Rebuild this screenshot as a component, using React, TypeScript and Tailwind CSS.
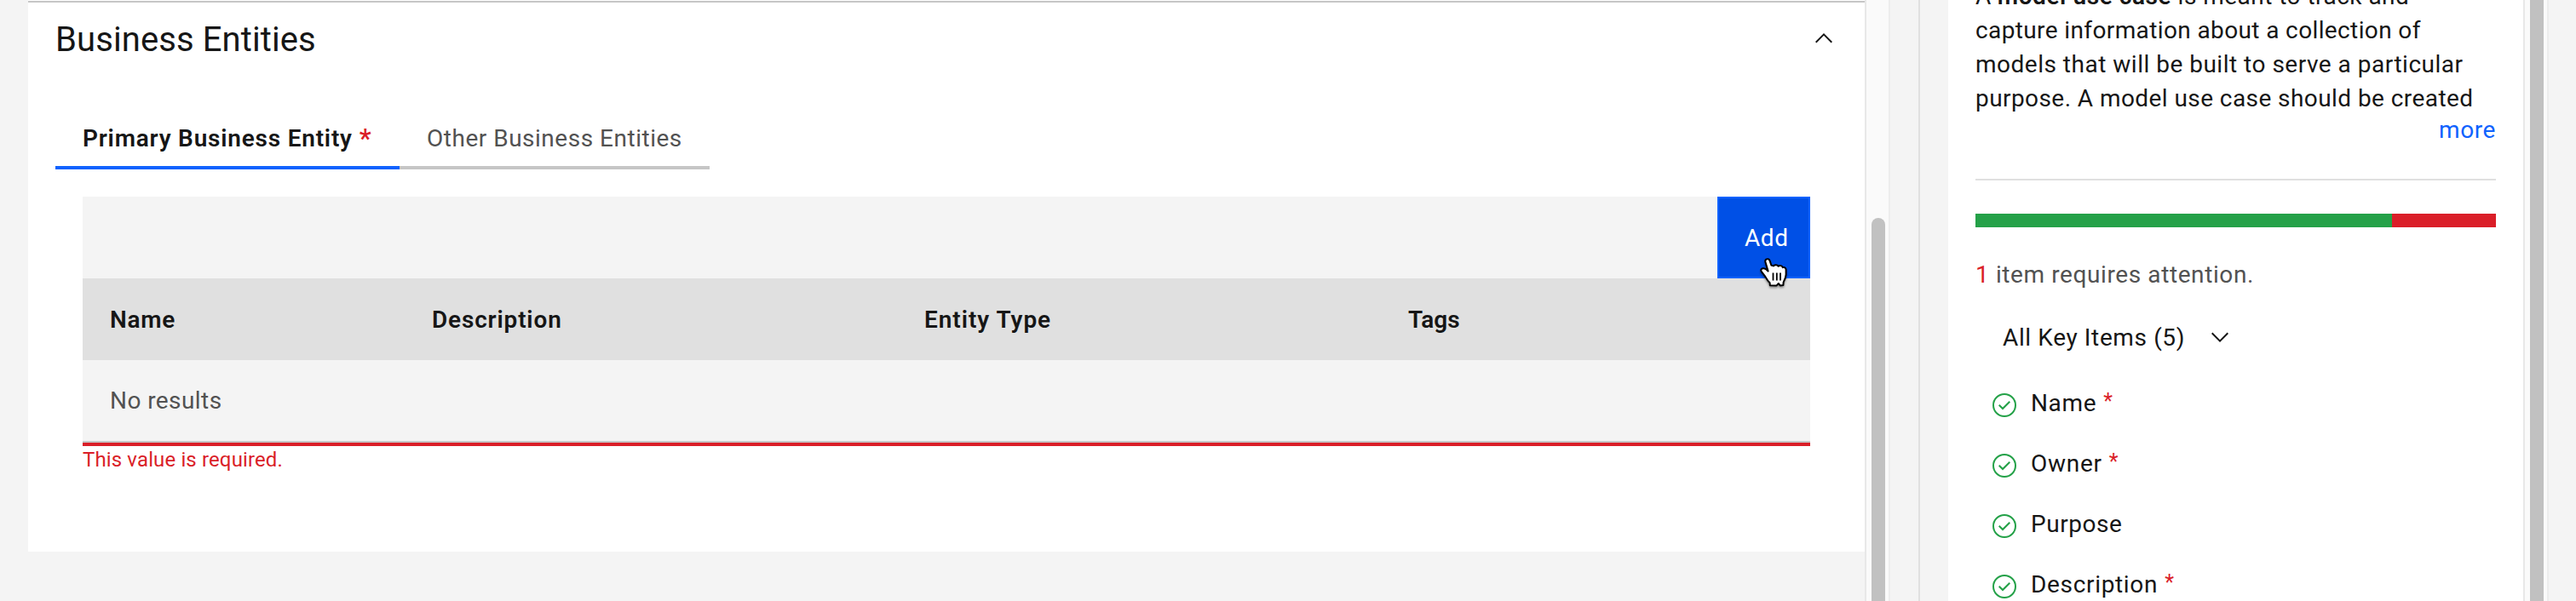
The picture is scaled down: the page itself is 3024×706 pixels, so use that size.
import type { ReactNode } from "react";

function ChevronUp() {
  return (
    <svg viewBox="0 0 32 32" className="size-8 fill-[#161616]">
      <path d="M16 10 26 20 24.6 21.4 16 12.8 7.4 21.4 6 20z" />
    </svg>
  );
}

function ChevronDown() {
  return (
    <svg viewBox="0 0 32 32" className="size-8 fill-[#161616]">
      <path d="M16 22 6 12 7.4 10.6 16 19.2 24.6 10.6 26 12z" />
    </svg>
  );
}

function CheckOutline() {
  return (
    <svg viewBox="0 0 32 32" className="size-8 shrink-0 fill-[#24a148]">
      <path d="M14 21.414l-5-5.001L10.413 15 14 18.586 21.585 11 23 12.415z" />
      <path d="M16 2a14 14 0 1 0 14 14A14 14 0 0 0 16 2Zm0 26a12 12 0 1 1 12-12 12 12 0 0 1-12 12Z" />
    </svg>
  );
}

function HandPointer() {
  return (
    <svg
      viewBox="0 0 34 38"
      className="absolute left-[47px] top-[69px] h-[38px] w-[34px] drop-shadow-[0_2px_1px_rgba(0,0,0,0.35)]"
    >
      <path
        d="M9.6 2.2C7.6 2.4 6.9 4.2 7.5 6L10.6 16.6C9.4 15.2 7.4 13.4 5.4 13.2 3 13 1.6 14.8 2.6 16.6 4.4 19.4 6.4 21.2 8.2 24.4 9.4 27 11 28.6 12.6 30.2L12.8 33.2 20.6 33.4 22.8 31 24.8 33.4 28.4 33 28.6 29.6C30 27 31.4 24 31.6 20.6L31.6 14.6C31.4 12.4 29.4 11.4 27.8 12.2 27.2 10 24.4 9.4 22.6 10.8 21.4 8.8 18.4 8.8 17 10.4 16.4 10 15.2 9.6 14.4 9.8L12.6 4.4C12.2 2.8 11 2 9.6 2.2Z"
        className="fill-white stroke-black stroke-2"
        strokeLinejoin="round"
      />
      <path d="M16.5 18.5v9M20.8 18.5v9M25 18.5v9" className="fill-none stroke-black stroke-[1.8]" />
    </svg>
  );
}

function KeyItem({ children, required }: { children: ReactNode; required?: boolean }) {
  return (
    <li className="flex h-[71px] items-start">
      <CheckOutline />
      <span className="-mt-[6px] ml-[15px] leading-[40px]">{children}</span>
      {required && (
        <span className="-mt-[8px] ml-[8px] text-[25px] leading-[40px] tracking-normal text-[#da1e28]">*</span>
      )}
    </li>
  );
}

function Scrollbar({ thumb }: { thumb: ReactNode }) {
  return (
    <div className="flex w-[30px] shrink-0 flex-col border-l-2 border-r-2 border-l-[#e8e8e8] border-r-[#ededed] bg-[#fafafa] pl-[6px] pr-[4px]">
      {thumb}
    </div>
  );
}

export default function App() {
  return (
    <div className="flex h-[706px] w-[3024px] overflow-hidden bg-[#f4f4f4] font-['Roboto',sans-serif] text-[28px] text-[#161616]">
      <main className="flex w-[2189px] shrink-0 pl-[33px]">
        <section className="h-[648px] w-full bg-white pt-px">
          <div className="border-t-2 border-[#c6c6c6]">
            <header className="flex h-[132px] items-start justify-between pl-8 pr-8 pt-[20px]">
              <h2 className="text-[40px] leading-[48px] tracking-[0.1px]">Business Entities</h2>
              <span className="mt-[6px]">
                <ChevronUp />
              </span>
            </header>

            <div className="ml-8 flex h-[64px]">
              <div className="flex w-[404px] border-b-4 border-[#0f62fe] pl-8 pt-[10px] font-semibold leading-[36px] tracking-[0.78px]">
                Primary Business Entity
                <span className="ml-[8px] text-[31px] text-[#da1e28]">*</span>
              </div>
              <div className="w-[364px] border-b-4 border-[#c6c6c6] pl-8 pt-[10px] leading-[36px] tracking-[0.51px] text-[#525252]">
                Other Business Entities
              </div>
            </div>

            <div className="ml-16 mt-8 w-[2028px]">
              <div className="flex h-24 justify-end bg-[#f4f4f4]">
                <button className="relative w-[109px] border-2 border-[#0f62fe] bg-[#0050e6] pl-[30px] pt-[2px] text-left tracking-[0.55px] text-white">
                  Add
                  <HandPointer />
                </button>
              </div>
              <div className="flex h-24 items-center bg-[#e0e0e0] pt-[2px] pl-8 font-semibold">
                <span className="w-[378px] tracking-[0.7px]">Name</span>
                <span className="w-[578px] tracking-[0.82px]">Description</span>
                <span className="w-[568px] tracking-[0.96px]">Entity Type</span>
                <span>Tags</span>
              </div>
              <div className="flex h-[97px] items-center border-b-2 border-[#c6c6c6] bg-[#f4f4f4] pl-8 pt-px tracking-[0.43px] text-[#525252]">
                No results
              </div>
              <div className="h-1 bg-[#da1e28]" />
              <p className="text-[24px] leading-[32px] tracking-[0.13px] text-[#da1e28]">
                This value is required.
              </p>
            </div>
          </div>
        </section>
      </main>

      <Scrollbar thumb={<div className="mt-64 h-[500px] rounded-t-full bg-[#c1c1c1]" />} />

      <aside className="flex w-[805px] shrink-0">
        <div className="ml-[33px] w-[35px] shrink-0 border-l-2 border-[#e0e0e0]" />
        <div className="w-[675px] shrink-0 bg-white px-8">
          <div className="-mt-[24px] whitespace-nowrap leading-[40px]">
            <p>
              <span className="tracking-[0.3px]">A </span>
              <b className="font-semibold tracking-[0.57px]">model use case</b>
              <span className="tracking-[0.47px]"> is meant to track and</span>
            </p>
            <p className="tracking-[0.38px]">capture information about a collection of</p>
            <p className="tracking-[0.5px]">models that will be built to serve a particular</p>
            <p className="tracking-[0.43px]">purpose. A model use case should be created</p>
          </div>
          <p className="-mt-[3px] text-right leading-[40px] tracking-[0.6px] text-[#0f62fe]">more</p>
          <div className="mt-[37px] h-[2px] bg-[#e0e0e0]" />
          <div className="mt-[39px] flex h-4">
            <div className="flex-4 bg-[#24a148]" />
            <div className="flex-1 bg-[#da1e28]" />
          </div>
          <p className="mt-[36px] leading-[40px] tracking-[0.6px] text-[#525252]">
            <span className="text-[#da1e28]">1</span> item requires attention.
          </p>
          <div className="mt-[34px] flex items-start pl-8">
            <span className="leading-[40px] tracking-[0.62px]">All Key Items (5)</span>
            <span className="ml-[25px] mt-[3px]">
              <ChevronDown />
            </span>
          </div>
          <ul className="mt-[43px] pl-[18px]">
            <KeyItem required>
              <span className="tracking-[0.65px]">Name</span>
            </KeyItem>
            <KeyItem required>
              <span className="tracking-[0.75px]">Owner</span>
            </KeyItem>
            <KeyItem>
              <span className="tracking-[0.55px]">Purpose</span>
            </KeyItem>
            <KeyItem required>
              <span className="tracking-[0.67px]">Description</span>
            </KeyItem>
          </ul>
        </div>
        <Scrollbar thumb={<div className="h-[706px] bg-[#c1c1c1]" />} />
      </aside>
    </div>
  );
}
